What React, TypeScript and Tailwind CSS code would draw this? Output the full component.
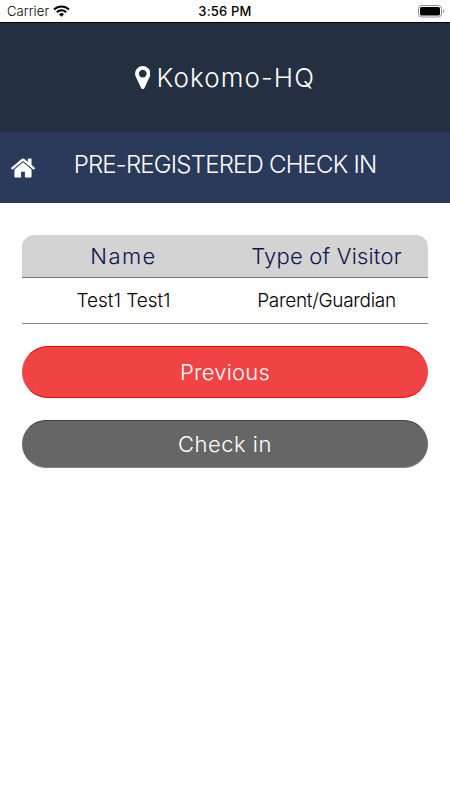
type IconProps = { className?: string };

function MapMarker({ className }: IconProps) {
  return (
    <svg viewBox="384 128 1024 1536" fill="currentColor" className={className}>
      <path d="M1152 640q0-106-75-181t-181-75-181 75-75 181 75 181 181 75 181-75 75-181zm256 0q0 109-33 179l-364 774q-16 33-47.5 52t-67.5 19-67.5-19-46.5-52l-365-774q-33-70-33-179 0-212 150-362t362-150 362 150 150 362z" />
    </svg>
  );
}

function Home({ className }: IconProps) {
  return (
    <svg viewBox="90 248 1612 1290" fill="currentColor" className={className}>
      <path d="M1472 992v480q0 26-19 45t-45 19h-384v-384h-256v384h-384q-26 0-45-19t-19-45v-480q0-1 .5-3t.5-3l575-474 575 474q1 2 1 6zm223-69l-62 74q-8 9-21 11h-3q-13 0-21-7l-692-577-692 577q-12 8-24 7-13-2-21-11l-62-74q-8-10-7-23.5t11-21.5l719-599q32-26 76-26t76 26l244 204v-195q0-14 9-23t23-9h192q14 0 23 9t9 23v408l219 182q10 8 11 21.5t-7 23.5z" />
    </svg>
  );
}

function Wifi({ className }: IconProps) {
  return (
    <svg viewBox="0 0 17 12" fill="none" stroke="currentColor" strokeWidth="2" className={className}>
      <path d="M1 4.5a10.7 10.7 0 0 1 15 0M3.8 7.3a6.7 6.7 0 0 1 9.4 0" />
      <path d="M8.5 11.7 6 9.2a3.6 3.6 0 0 1 5 0z" fill="currentColor" stroke="none" />
    </svg>
  );
}

function Battery({ className }: IconProps) {
  return (
    <svg viewBox="0 0 27 13" className={className}>
      <rect x="0.5" y="0.5" width="23" height="11.5" rx="3.2" fill="none" stroke="#8e8e8e" />
      <rect x="2" y="2" width="20" height="8.5" rx="1.5" fill="#000" />
      <path d="M25 4.3c1.6.7 1.6 3.3 0 4z" fill="#8e8e8e" />
    </svg>
  );
}

function StatusBar() {
  return (
    <div className="grid h-[23px] grid-cols-3 items-center border-b border-black px-[7px] text-[13px] text-black">
      <div className="flex items-center gap-1">
        <span className="pt-px font-[350] tracking-[0.1px]">Carrier</span>
        <Wifi className="h-3 w-[17px]" />
      </div>
      <span className="pt-px text-center font-medium tracking-[0.2px]">3:56 PM</span>
      <Battery className="-mr-[2px] h-[13px] w-[27px] justify-self-end" />
    </div>
  );
}

const visitors = [{ name: "Test1 Test1", type: "Parent/Guardian" }];

export default function App() {
  return (
    <div className="min-h-screen bg-white font-['Inter',sans-serif]">
      <StatusBar />
      <header className="flex h-[109px] items-center justify-center gap-1.5 bg-[#242f42] pb-px text-white">
        <MapMarker className="h-[23px] w-[15.5px]" />
        <h1 className="text-[26px] font-[350] tracking-[1.1px]">Kokomo-HQ</h1>
      </header>
      <div className="grid h-[71px] grid-cols-[48px_1fr_48px] items-center bg-[#2a3a5a] text-white">
        <Home className="ml-[11px] h-[20px] w-[24px]" />
        <h2 className="pb-1.5 text-center text-[24px] font-[350] whitespace-nowrap tracking-[-0.8px]">
          PRE-REGISTERED CHECK IN
        </h2>
      </div>

      <main className="px-[22px] pt-8">
        <div className="grid h-[43px] grid-cols-2 items-center rounded-t-xl border-b border-[#777] bg-[#d3d3d3] text-center text-[22px] font-[350] text-[#0b164d]">
          <span className="tracking-[1.4px]">Name</span>
          <span className="tracking-[0.2px]">Type of Visitor</span>
        </div>
        {visitors.map((v) => (
          <div
            key={v.name}
            className="grid h-[46px] grid-cols-2 items-center border-b border-[#888] pt-0.5 text-center text-[19px] font-[350] text-black"
          >
            <span className="tracking-[-0.05px]">{v.name}</span>
            <span className="tracking-[-0.3px]">{v.type}</span>
          </div>
        ))}
        <button className="mt-[22px] block h-[52px] w-full rounded-full border border-[#f04444] border-y-[#f80000] bg-[#f04444] text-[22px] font-[350] tracking-[0.2px] text-white">
          Previous
        </button>
        <button className="mt-[22px] block h-[48px] w-full rounded-full border border-[#666] border-t-[#3d4542] border-b-[#808080] bg-[#666] text-[22px] font-[350] tracking-[0.5px] text-white">
          Check in
        </button>
      </main>
    </div>
  );
}
